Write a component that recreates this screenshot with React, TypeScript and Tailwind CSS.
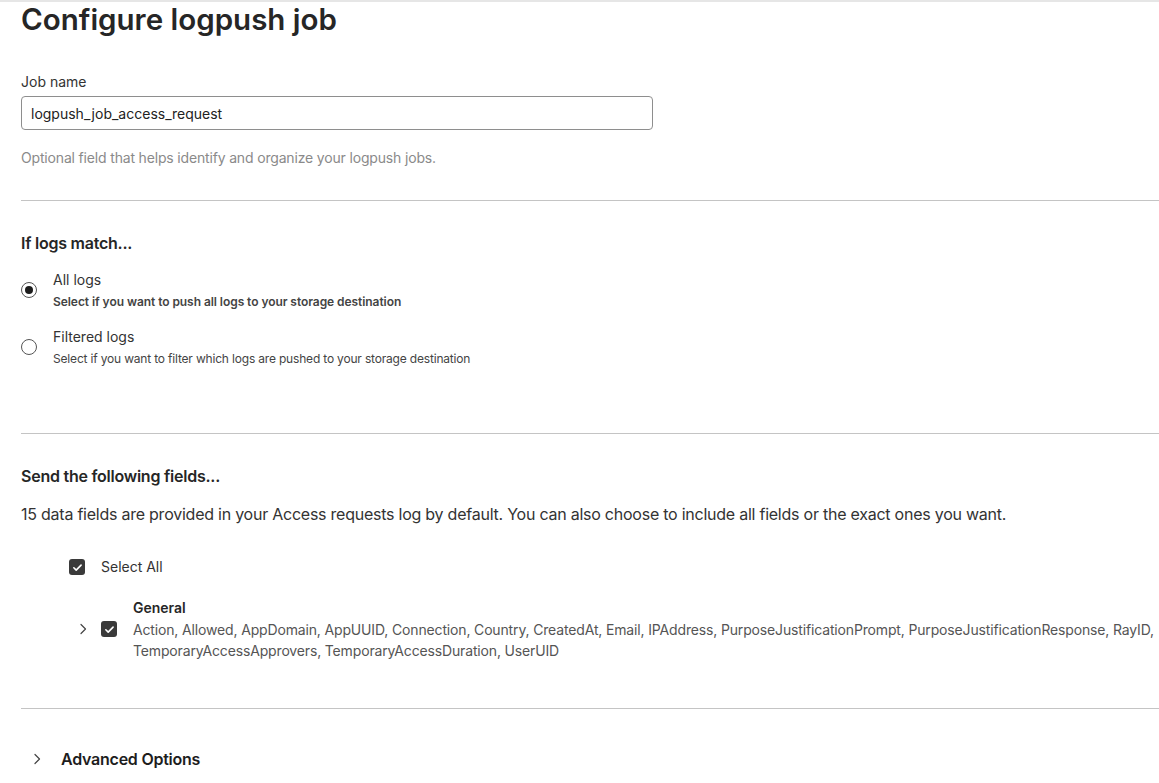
import React from "react";

const generalFields =
  "Action, Allowed, AppDomain, AppUUID, Connection, Country, CreatedAt, Email, IPAddress, PurposeJustificationPrompt, PurposeJustificationResponse, RayID, TemporaryAccessApprovers, TemporaryAccessDuration, UserUID";

function Radio({ checked }: { checked?: boolean }) {
  return (
    <span className="flex h-4 w-4 shrink-0 items-center justify-center rounded-full border border-[#555] bg-white">
      {checked && <span className="h-2 w-2 rounded-full bg-[#1d1d1d]" />}
    </span>
  );
}

function Checkbox() {
  return (
    <span className="flex h-4 w-4 shrink-0 items-center justify-center rounded-[3px] bg-[#3a3a3a]">
      <svg viewBox="0 0 16 16" className="h-[13px] w-[13px]" fill="none">
        <path d="M3.5 8.3l2.9 2.9 6-6.2" stroke="#fff" strokeWidth="2" strokeLinecap="round" strokeLinejoin="round" />
      </svg>
    </span>
  );
}

function Chevron({ className }: { className?: string }) {
  return (
    <svg viewBox="0 0 16 16" className={className} fill="none">
      <path d="M6 3.5L10.5 8 6 12.5" stroke="#444" strokeWidth="1.2" strokeLinecap="round" strokeLinejoin="round" />
    </svg>
  );
}

export default function App() {
  return (
    <div className="min-h-screen bg-white font-['Inter',sans-serif] text-[#222] border-t-2 border-[#e6e6e6] overflow-hidden">
      <div className="pl-[21px]">
        <h1 className="text-[29.5px] font-semibold leading-[35px] text-[#262626]">
          Configure logpush job
        </h1>

        {/* Job name */}
        <section className="pt-[35px] pb-[32px]">
          <label className="block text-sm leading-5 text-[#333]">Job name</label>
          <input
            readOnly
            value="logpush_job_access_request"
            className="mt-[4px] block h-[34px] w-[632px] rounded-[4px] border border-[#8e8e8e] px-[9px] text-sm text-[#222] outline-none"
          />
          <p className="mt-[18px] text-sm leading-5 tracking-[-0.012em] text-[#8a8a8a]">
            Optional field that helps identify and organize your logpush jobs.
          </p>
        </section>

        <hr className="border-t border-[#c4c4c4]" />

        {/* If logs match */}
        <section className="pt-[30px] pb-[66px]">
          <h2 className="text-base font-semibold leading-6 tracking-[-0.015em] text-[#262626]">If logs match...</h2>
          <div className="mt-[15px] flex flex-col gap-[17px]">
            <div className="flex items-center gap-4">
              <Radio checked />
              <div>
                <div className="text-sm leading-5 text-[#333]">All logs</div>
                <div className="mt-[4px] text-xs font-semibold leading-4 tracking-[-0.005em] text-[#444]">
                  Select if you want to push all logs to your storage destination
                </div>
              </div>
            </div>
            <div className="flex items-center gap-4">
              <Radio />
              <div>
                <div className="text-sm leading-5 text-[#333]">Filtered logs</div>
                <div className="mt-[4px] text-xs leading-4 tracking-[-0.015em] text-[#444]">
                  Select if you want to filter which logs are pushed to your storage destination
                </div>
              </div>
            </div>
          </div>
        </section>

        <hr className="border-t border-[#c4c4c4]" />

        {/* Fields */}
        <section className="pt-[30px] pb-[47px]">
          <h2 className="text-base font-semibold leading-6 tracking-[-0.015em] text-[#262626]">Send the following fields...</h2>
          <p className="mt-[14px] text-base leading-6 tracking-[-0.015em] text-[#333]">
            15 data fields are provided in your Access requests log by default. You can also choose to include all fields or the exact ones you want.
          </p>
          <div className="mt-[31px] pl-[48px]">
            <div className="flex items-center gap-4">
              <Checkbox />
              <span className="text-sm leading-5 text-[#333]">Select All</span>
            </div>
            <div className="mt-[21px] pl-[64px] text-sm font-semibold leading-5 text-[#262626]">General</div>
            <div className="mt-[1px] flex items-start">
              <div className="mt-[2px] flex w-[64px] shrink-0 items-center">
                <span className="flex w-[32px] justify-center pr-[4px]">
                  <Chevron className="h-4 w-4" />
                </span>
                <Checkbox />
              </div>
              <p className="text-sm leading-[21px] tracking-[-0.011em] text-[#555]">{generalFields}</p>
            </div>
          </div>
        </section>

        <hr className="border-t border-[#c4c4c4]" />

        {/* Advanced */}
        <section className="pt-[38px] pl-[8px]">
          <div className="flex items-center gap-[16px]">
            <Chevron className="h-4 w-4" />
            <span className="text-base font-semibold leading-6 tracking-[-0.015em] text-[#1d1d1d]">Advanced Options</span>
          </div>
        </section>
      </div>
    </div>
  );
}
